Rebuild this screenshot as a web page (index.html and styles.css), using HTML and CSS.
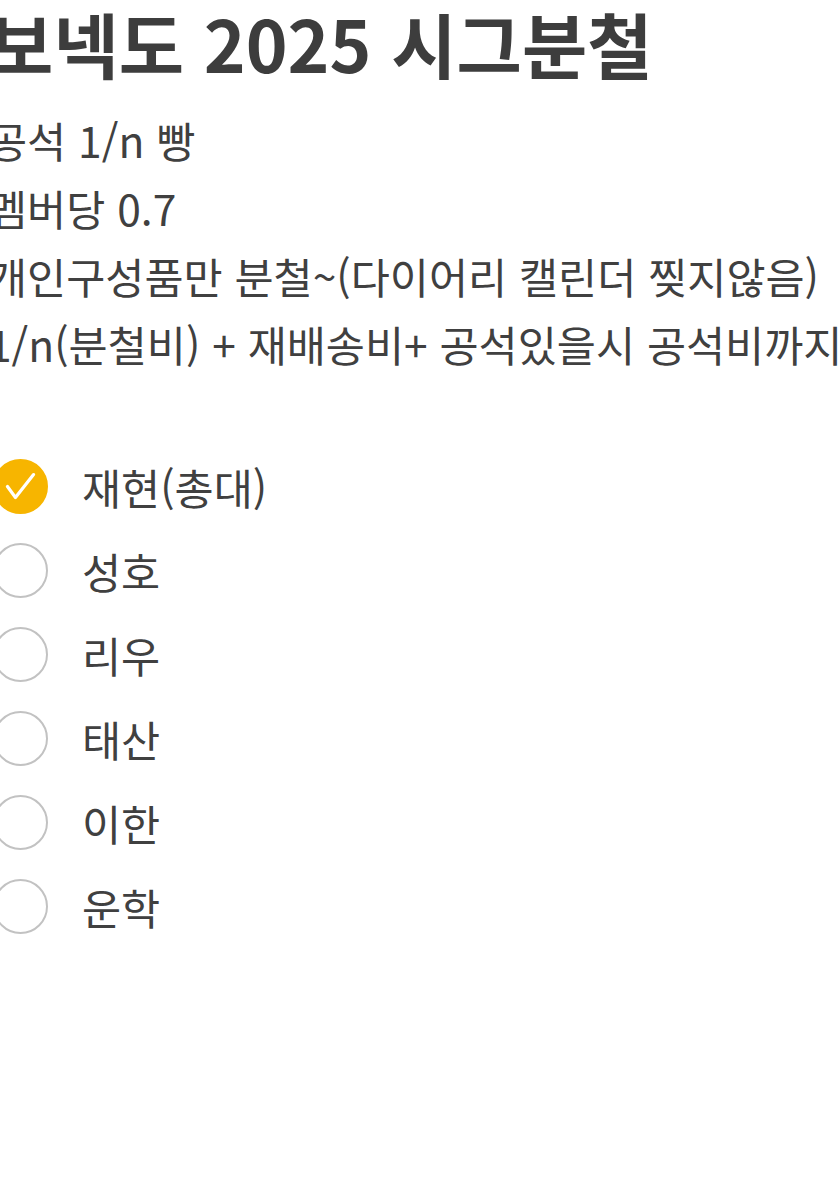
FILE: index.html
```html
<!DOCTYPE html>
<html lang="ko">
<head>
    <meta charset="UTF-8">
    <meta name="viewport" content="width=device-width, initial-scale=1.0">
    <title>보넥도 2025 시그분철</title>
    <link rel="stylesheet" href="styles.css">
</head>
<body>

    <div class="post">
        <h1 class="title">보넥도 2025 시그분철</h1>

        <!-- 분철 안내 -->
        <div class="notes">
            <p>공석 1/n 빵</p>
            <p>멤버당 0.7</p>
            <p>개인구성품만 분철~(다이어리 캘린더 찢지않음)</p>
            <p>1/n(분철비) + 재배송비+ 공석있을시 공석비까지</p>
        </div>

        <!-- 멤버 선택 -->
        <ul class="members">
            <li class="member checked"><span class="check"><svg viewBox="0 0 24 24"><path d="M6.3 12l3.5 4.8 7.9-10"/></svg></span>재현(총대)</li>
            <li class="member"><span class="check"></span>성호</li>
            <li class="member"><span class="check"></span>리우</li>
            <li class="member"><span class="check"></span>태산</li>
            <li class="member"><span class="check"></span>이한</li>
            <li class="member"><span class="check"></span>운학</li>
        </ul>
    </div>

</body>
</html>
```

FILE: styles.css
```css
body {
    margin: 0;
    background-color: #ffffff;
    font-family: "Noto Sans CJK KR", "Noto Sans", sans-serif;
    color: #404040;
    overflow: hidden;
}

.post {
    margin-left: -12px;
    white-space: nowrap;
}

.title {
    margin: 0;
    font-size: 71px;
    font-weight: bold;
    line-height: 84px;
    color: #3d3d3d;
}

.notes {
    margin-top: 22px;
}

.notes p {
    margin: 0;
    font-size: 42.5px;
    line-height: 68px;
}

.members {
    list-style: none;
    margin: 66px 0 0;
    padding: 0;
}

.member {
    display: flex;
    align-items: center;
    gap: 34px;
    height: 84px;
    font-size: 42.5px;
}

.check {
    box-sizing: border-box;
    width: 55px;
    height: 55px;
    margin-left: 5px;
    border: 2px solid #c2c2c2;
    border-radius: 50%;
    flex-shrink: 0;
}

.checked .check {
    background-color: #f7b500;
    border-color: #f7b500;
}

.check svg {
    display: block;
    width: 55px;
    height: 55px;
    margin: -2px;
    fill: none;
    stroke: #ffffff;
    stroke-width: 1.4;
    stroke-linecap: round;
    stroke-linejoin: round;
}
```
